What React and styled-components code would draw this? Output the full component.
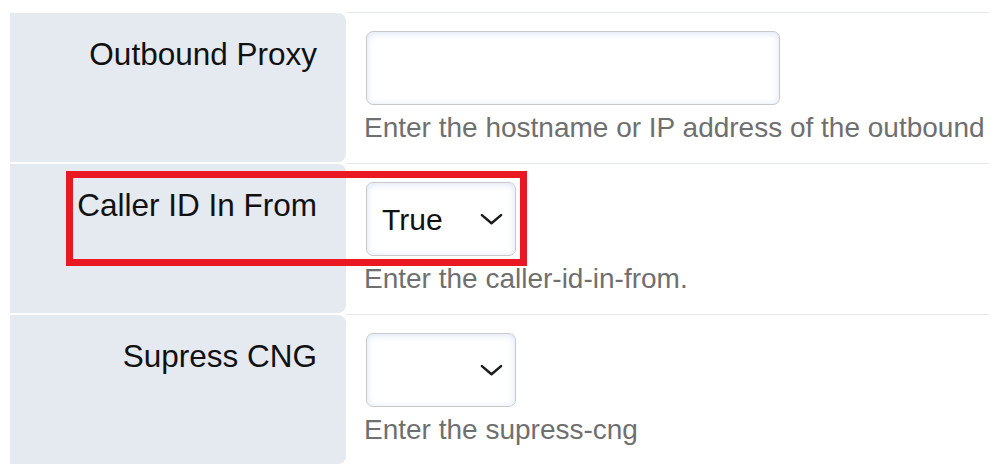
import React from "react";
import styled, { createGlobalStyle } from "styled-components";

const GlobalStyle = createGlobalStyle`
  html, body {
    margin: 0;
    padding: 0;
    background: #ffffff;
  }
  body {
    font-family: "Liberation Sans", Arial, sans-serif;
  }
`;

const fields = [
  {
    label: "Outbound Proxy",
    type: "text",
    help: "Enter the hostname or IP address of the outbound",
  },
  {
    label: "Caller ID In From",
    type: "select",
    value: "True",
    help: "Enter the caller-id-in-from.",
    marked: true,
  },
  {
    label: "Supress CNG",
    type: "select",
    value: "",
    help: "Enter the supress-cng",
  },
];

function Chevron() {
  return (
    <Arrow viewBox="0 0 24 12" width="23" height="12">
      <path
        d="M2 2l10 8.5L22 2"
        fill="none"
        stroke="#1c1c1c"
        strokeWidth="2.6"
        strokeLinecap="round"
        strokeLinejoin="round"
      />
    </Arrow>
  );
}

function App() {
  return (
    <>
      <GlobalStyle />
      <Page>
        <Table>
          {fields.map((f) => (
            <Row key={f.label}>
              <LabelCell>{f.label}</LabelCell>
              <ValueCell>
                {f.type === "text" ? (
                  <TextInput type="text" defaultValue="" />
                ) : (
                  <SelectWrap>
                    <Select defaultValue={f.value}>
                      <option value=""></option>
                      <option value="True">True</option>
                      <option value="False">False</option>
                    </Select>
                    <Chevron />
                  </SelectWrap>
                )}
                <Help>{f.help}</Help>
              </ValueCell>
              {f.marked && <Highlight />}
            </Row>
          ))}
        </Table>
      </Page>
    </>
  );
}

export default App;

const Page = styled.div`
  width: 998px;
  height: 472px;
  box-sizing: border-box;
  padding: 12px 9px 0 10px;
  overflow: hidden;
`;

const Table = styled.div`
  display: flex;
  flex-direction: column;
`;

const Row = styled.div`
  position: relative;
  display: grid;
  grid-template-columns: 336px 1fr;
  height: 151px;
`;

const LabelCell = styled.div`
  margin-top: 1px;
  height: 149px;
  box-sizing: border-box;
  background: #e5e9f0;
  border-radius: 0 8px 8px 0;
  text-align: right;
  padding: 23px 29px 0 0;
  font-size: 31.5px;
  line-height: 36px;
  color: #111111;
  white-space: nowrap;
`;

const ValueCell = styled.div`
  border-top: 1px solid #e5e8ed;
  padding: 18px 0 0 20px;
  display: flex;
  flex-direction: column;
  align-items: flex-start;
`;

const fieldBox = `
  box-sizing: border-box;
  height: 74px;
  border: 1.5px solid #c9c9c9;
  border-radius: 7px;
  background: #ffffff;
  box-shadow: inset 0 1px 7px rgba(70, 110, 210, 0.2);
  outline: none;
  font-family: "Liberation Sans", Arial, sans-serif;
`;

const TextInput = styled.input`
  ${fieldBox}
  width: 414px;
  padding: 0 14px;
  font-size: 28px;
`;

const SelectWrap = styled.div`
  position: relative;
  width: 150px;
  height: 74px;
`;

const Select = styled.select`
  ${fieldBox}
  appearance: none;
  -webkit-appearance: none;
  width: 150px;
  padding: 0 40px 0 15px;
  font-size: 30px;
  color: #111111;
`;

const Arrow = styled.svg`
  position: absolute;
  right: 13px;
  top: 31px;
  pointer-events: none;
`;

const Help = styled.div`
  margin: 7px 0 0 -2px;
  font-size: 28px;
  line-height: 32px;
  color: #6f6f6f;
  white-space: nowrap;
`;

const Highlight = styled.div`
  position: absolute;
  left: 56px;
  top: 8px;
  width: 461px;
  height: 95px;
  box-sizing: border-box;
  border: 7px solid #ea1822;
  pointer-events: none;
`;
